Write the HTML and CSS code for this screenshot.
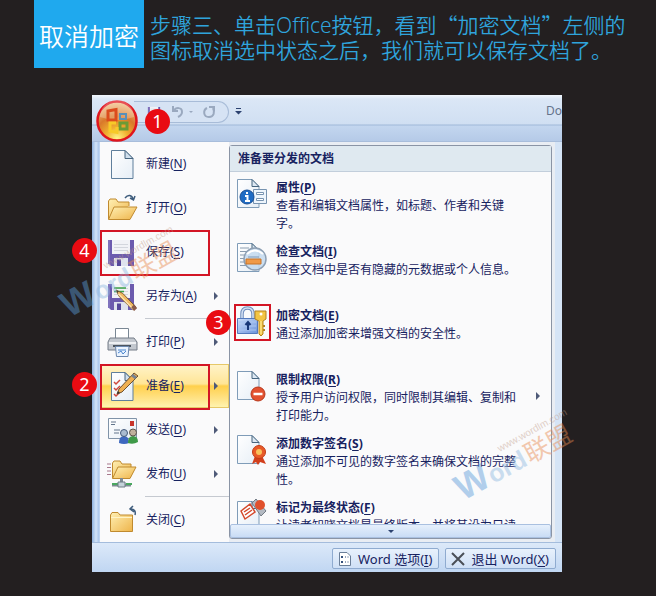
FILE: index.html
```html
<!DOCTYPE html>
<html lang="zh-CN">

<head>
    <meta charset="UTF-8">
    <meta name="viewport" content="width=device-width, initial-scale=1.0">
    <title>取消加密</title>
    <link rel="stylesheet" href="styles.css">
</head>

<body>

    <!-- gradientes e formas usadas em varios icones -->
    <svg class="defs" width="0" height="0" aria-hidden="true">
        <defs>
            <linearGradient id="folder" x1="0" y1="0" x2="1" y2="1">
                <stop offset="0" stop-color="#fff0b4" />
                <stop offset="1" stop-color="#eeb44a" />
            </linearGradient>
            <linearGradient id="paper" x1="0" y1="0" x2="1" y2="1">
                <stop offset="0" stop-color="#ffffff" />
                <stop offset="1" stop-color="#e6eef6" />
            </linearGradient>
            <linearGradient id="lock" x1="0" y1="0" x2="1" y2="1">
                <stop offset="0" stop-color="#cfe0fb" />
                <stop offset="1" stop-color="#6a92dc" />
            </linearGradient>
            <radialGradient id="orb" cx="0.5" cy="0.95" r="0.95">
                <stop offset="0" stop-color="#fff58a" />
                <stop offset="0.3" stop-color="#f0b030" />
                <stop offset="0.6" stop-color="#d9782a" />
                <stop offset="1" stop-color="#f3c48c" />
            </radialGradient>
            <symbol id="page" viewBox="0 0 32 32">
                <path d="M5.500 2.500H19L27 10.500V30.500H5.500Z" fill="url(#paper)" stroke="#5f7f9c" />
                <path d="M19 2.500V10.500H27Z" fill="#cfdfed" stroke="#47657f" />
            </symbol>
            <symbol id="doc" viewBox="0 0 32 32">
                <path d="M.500 1.500H15L22 8.500V29.500H.500Z" fill="url(#paper)" stroke="#7f9cb8" />
                <path d="M15 1.500V8.500H22Z" fill="#dce8f3" stroke="#47657f" />
            </symbol>
            <symbol id="floppy" viewBox="0 0 32 32">
                <path d="M2 4H28V30H5L2 27Z" fill="#6c5bae" />
                <path d="M2 4H4V28H2Z" fill="#8073bd" />
                <path d="M6 4H24V18H6Z" fill="#f1f2f6" />
                <path d="M8 8.500H22M8 11.500H22M8 14.500H22" stroke="#d3d6dd" />
                <path d="M8 22H22V30H8Z" fill="#dfe3ee" />
                <path d="M11 23.500H15V30H11Z" fill="#55479a" />
            </symbol>
            <symbol id="pencil" viewBox="0 0 24 24">
                <path d="M1 1L8 4.500L22 19L19 22L4.500 8Z" fill="#f0b964" stroke="#7b5a2c" />
                <path d="M3.500 5L19 21" stroke="#fbe2ae" stroke-width="1.500" />
                <path d="M17 19L20 16L23 20L20 23Z" fill="#8b5c4a" />
                <path d="M1 1L4 2.500L2.500 4Z" fill="#333" />
            </symbol>
            <symbol id="watermark" viewBox="0 0 150 110">
                <g transform="translate(18 98) rotate(-29)">
                    <text class="wm-w" x="0" y="0">W</text>
                    <text class="wm-ord" x="35" y="0">ord</text>
                    <text class="wm-cn" x="77" y="0">联盟</text>
                    <text class="wm-url" x="56" y="-25">www.wordlm.com</text>
                </g>
            </symbol>
        </defs>
    </svg>

    <header class="step">
        <h1 class="step-tag">取消加密</h1>
        <p class="step-text">步骤三、单击<span class="latin">Office</span>按钮，看到“加密文档”左侧的<br>图标取消选中状态之后，我们就可以保存文档了。</p>
    </header>

    <main class="window">
        <div class="titlebar">
            <button class="office" aria-label="Office">
                <svg viewBox="0 0 42 42" width="42" height="42">
                    <circle cx="21" cy="21" r="19.500" fill="url(#orb)" stroke="#e0151d" stroke-width="2.500" />
                    <path d="M4 17A17 17 0 0 1 38 17Q21 23 4 17Z" fill="#fff" opacity=".25" />
                    <path d="M12 11L20 9.500V20H12Z" fill="none" stroke="#dc4b1c" stroke-width="3" />
                    <path d="M24 14H30V19H24Z" fill="none" stroke="#5a8fb8" stroke-width="2" />
                    <path d="M24 23H31V29H24Z" fill="none" stroke="#6b9b35" stroke-width="3" />
                    <path d="M20 23H14V31L21 32.500V27" fill="none" stroke="#f7c928" stroke-width="3" />
                </svg>
            </button>
            <span class="badge badge-office">1</span>
            <div class="quick">
                <button aria-label="保存">
                    <svg viewBox="0 0 32 32" width="15" height="15"><use href="#floppy" /></svg>
                </button>
                <button aria-label="撤消">
                    <svg viewBox="0 0 22 14" width="22" height="14" fill="none" stroke="#9aa9bf" stroke-width="2">
                        <path d="M2 1V6H7M2.500 6C5 2 11 2 11 7C11 10 9 11 7 12" />
                        <path d="M18 6H22L20 8Z" fill="#9aa9bf" stroke="none" />
                    </svg>
                </button>
                <button aria-label="恢复">
                    <svg viewBox="0 0 14 14" width="14" height="14" fill="none" stroke="#9aa9bf" stroke-width="2">
                        <path d="M7 2H12V6M11 3C13 7 12 12 7 12C1 12 1 5 5 3" />
                    </svg>
                </button>
            </div>
            <button class="more" aria-label="自定义快速访问工具栏">
                <svg viewBox="0 0 7 7" width="7" height="7" fill="#2c4270"><path d="M1 0H6V1H1ZM0 3H7L3.500 6.500Z" /></svg>
            </button>
            <span class="doc-title">Do</span>
        </div>

        <div class="menu">
            <ul class="commands">
                <li>
                    <button>
                        <svg class="icon" viewBox="0 0 32 32"><use href="#page" /></svg>
                        <span>新建(<u>N</u>)</span>
                    </button>
                </li>
                <li>
                    <button>
                        <svg class="icon" viewBox="0 0 32 32">
                            <path d="M2.500 27V9L4 7H10L12 10H23V14" fill="url(#folder)" stroke="#c08a2e" />
                            <path d="M2.500 27.500L8 15H31L24 27.500Z" fill="url(#folder)" stroke="#c08a2e" />
                            <path d="M19 6C22 2 26 3 27 7M24 6L27.500 8L29 4" fill="none" stroke="#3e5c7c" stroke-width="1.500" />
                        </svg>
                        <span>打开(<u>O</u>)</span>
                    </button>
                </li>
                <li>
                    <button>
                        <svg class="icon" viewBox="0 0 32 32"><use href="#floppy" /></svg>
                        <span>保存(<u>S</u>)</span>
                    </button>
                    <span class="frame"></span>
                    <span class="badge">4</span>
                </li>
                <li class="has-sub">
                    <button>
                        <svg class="icon" viewBox="0 0 32 32">
                            <use href="#floppy" />
                            <path d="M8 8H20M8 11.500H18" stroke="#3ba34a" stroke-width="1.500" />
                            <use href="#pencil" x="9" y="9" width="23" height="23" />
                        </svg>
                        <span>另存为(<u>A</u>)</span>
                    </button>
                </li>
                <li class="sep"></li>
                <li class="has-sub">
                    <button>
                        <svg class="icon" viewBox="0 0 32 32">
                            <path d="M9.500 2.500H22.500V14H9.500Z" fill="#fff" stroke="#7a8794" />
                            <path d="M4 12H28L31 16V24H2V16Z" fill="#c3c8cf" stroke="#747d88" />
                            <path d="M3 17H30" stroke="#eef0f3" stroke-width="2" />
                            <path d="M7 20H25" stroke="#4b545e" stroke-width="2" />
                            <path d="M9.500 20.500H23L22 30.500H10.500Z" fill="#eaf3ff" stroke="#6b87ad" />
                            <path d="M12 24H20M12 27L15 25L17 28L20 25" fill="none" stroke="#4a86cf" />
                        </svg>
                        <span>打印(<u>P</u>)</span>
                    </button>
                </li>
                <li class="has-sub selected">
                    <button>
                        <svg class="icon" viewBox="0 0 32 32">
                            <use href="#page" />
                            <path d="M8 12L10 14L14 10M8 18L10 20L14 16M8 24L10 26L14 22" fill="none" stroke="#d0483c" stroke-width="1.500" />
                            <path d="M11 24L13 19L28 3L32 6L16 22Z" fill="#efb052" stroke="#6f5230" />
                            <path d="M26 5L30 8" stroke="#768290" stroke-width="3" />
                            <path d="M11 24L12 21L14 23Z" fill="#333" />
                        </svg>
                        <span>准备(<u>E</u>)</span>
                    </button>
                    <span class="frame"></span>
                    <span class="badge">2</span>
                </li>
                <li class="has-sub">
                    <button>
                        <svg class="icon" viewBox="0 0 32 32">
                            <path d="M2.500 4.500H30.500V24.500H2.500Z" fill="url(#paper)" stroke="#8093a8" />
                            <path d="M5 8H10M5 10.500H9M8 16H14M8 19H13" stroke="#62758b" />
                            <path d="M24 7H28V12H24Z" fill="#c8352b" />
                            <path d="M13 29Q13 22 18 22Q23 22 23 29Q18 31 13 29Z" fill="#3e68bf" />
                            <circle cx="18" cy="19" r="3.500" fill="#a9bbd0" stroke="#44597a" />
                            <path d="M22 29Q22 22 27 22Q32 22 32 28Q27 31 22 29Z" fill="#3f9a48" />
                            <circle cx="27" cy="18.500" r="3.500" fill="#c0b09c" stroke="#5c5349" />
                        </svg>
                        <span>发送(<u>D</u>)</span>
                    </button>
                </li>
                <li class="has-sub">
                    <button>
                        <svg class="icon" viewBox="0 0 32 32">
                            <path d="M1 6H5M1 9.500H5M1 13H5M1 16.500H5" stroke="#a8788c" />
                            <path d="M6.500 20V5L8 3H14L16 6H25V9" fill="url(#folder)" stroke="#c08a2e" />
                            <path d="M6.500 20.500L12 9H30L24 20.500Z" fill="url(#folder)" stroke="#c08a2e" />
                            <path d="M15.500 20V25M6 27H25" stroke="#7f8b93" stroke-width="3" />
                            <path d="M6 26H12M20 26H26" stroke="#4aa860" stroke-width="2" />
                            <path d="M12 24H19V29H12Z" fill="#c5d3da" stroke="#6e7d86" />
                        </svg>
                        <span>发布(<u>U</u>)</span>
                    </button>
                </li>
                <li class="sep"></li>
                <li>
                    <button>
                        <svg class="icon" viewBox="0 0 32 32">
                            <path d="M4.500 27.500V11L6 8.500H12L14 11H26.500V27.500Z" fill="url(#folder)" stroke="#c08a2e" />
                            <path d="M5 13.500H26" stroke="#fff4c8" />
                            <path d="M29 11C30 7 28 5 25 5M27 2L24 5L28 8" fill="none" stroke="#3e5c7c" stroke-width="1.500" />
                        </svg>
                        <span>关闭(<u>C</u>)</span>
                    </button>
                </li>
            </ul>

            <section class="panel">
                <h2>准备要分发的文档</h2>
                <ul class="options">
                    <li>
                        <button>
                            <svg class="icon" viewBox="0 0 32 32">
                                <use href="#doc" />
                                <path d="M16.500 11.500H29.500V25.500H16.500Z" fill="#eef5fc" stroke="#7793b0" />
                                <path d="M19.500 14.500H26.500V16.500H19.500ZM19.500 20.500H26.500V22.500H19.500Z" fill="#fff" stroke="#7793b0" />
                                <circle cx="10" cy="19" r="7" fill="#1f6cc4" stroke="#1a4f94" />
                                <path d="M10 14V16M8 18H10.500V23M8 23H13" fill="none" stroke="#fff" stroke-width="2" />
                            </svg>
                            <span class="text"><strong>属性(<u>P</u>)</strong>查看和编辑文档属性，如标题、作者和关键字。</span>
                        </button>
                    </li>
                    <li>
                        <button>
                            <svg class="icon" viewBox="0 0 32 32">
                                <use href="#doc" />
                                <path d="M3 6H12M3 9.500H10M3 13H9M3 16.500H8M3 20H8M3 23.500H9" stroke="#8b9db0" />
                                <circle cx="18" cy="17" r="11" fill="#c3d9ef" fill-opacity=".85" stroke="#8d9fb3" stroke-width="1.500" />
                                <path d="M10 12Q18 5 26 12" fill="none" stroke="#fff" stroke-width="2" />
                                <path d="M9 17H24V22H9Z" fill="#f09a48" stroke="#c87428" />
                                <path d="M11 15H22" stroke="#7d99b8" />
                            </svg>
                            <span class="text"><strong>检查文档(<u>I</u>)</strong>检查文档中是否有隐藏的元数据或个人信息。</span>
                        </button>
                    </li>
                    <li>
                        <button>
                            <svg class="icon" viewBox="0 0 32 32">
                                <path d="M5 14V8Q5 2 10.500 2Q16 2 16 8V14" fill="none" stroke="#6f8dbd" stroke-width="3.500" />
                                <path d="M5 14V8Q5 2 10.500 2Q16 2 16 8V14" fill="none" stroke="#d4e1f4" stroke-width="1.500" />
                                <path d="M.500 12.500H20.500V27.500H.500Z" fill="url(#lock)" stroke="#5379bd" />
                                <path d="M2 16H19M2 20H19M2 24H19" stroke="#aac5f1" />
                                <path d="M11 24V17M8.500 19L11 16L13.500 19" fill="none" stroke="#183778" stroke-width="2" />
                                <path d="M18 5H29V13L26 15V28L24 30L22 28V15L18 13Z" fill="#f3c544" stroke="#b58420" />
                                <circle cx="24" cy="8" r="1.500" fill="#fff" />
                                <path d="M24 15V28" stroke="#fff0a0" />
                                <path d="M26 20H28M26 24H28" stroke="#b58420" stroke-width="2" />
                            </svg>
                            <span class="text"><strong>加密文档(<u>E</u>)</strong>通过添加加密来增强文档的安全性。</span>
                        </button>
                        <span class="frame frame-icon"></span>
                        <span class="badge badge-option">3</span>
                    </li>
                    <li class="has-sub">
                        <button>
                            <svg class="icon" viewBox="0 0 32 32">
                                <use href="#doc" />
                                <circle cx="21" cy="24" r="7" fill="#e2512f" stroke="#b8391d" />
                                <path d="M16.500 24H25.500" stroke="#fff" stroke-width="2.500" />
                            </svg>
                            <span class="text"><strong>限制权限(<u>R</u>)</strong>授予用户访问权限，同时限制其编辑、复制和打印能力。</span>
                        </button>
                    </li>
                    <li>
                        <button>
                            <svg class="icon" viewBox="0 0 32 32">
                                <use href="#doc" />
                                <path d="M18 22L15 30L19 28L21 31L23 28L29 30L25 22Z" fill="#d23f1c" />
                                <circle cx="22" cy="18" r="6.500" fill="#e85a28" stroke="#c23c16" />
                                <circle cx="22" cy="18" r="3" fill="#f9c25c" />
                            </svg>
                            <span class="text"><strong>添加数字签名(<u>S</u>)</strong>通过添加不可见的数字签名来确保文档的完整性。</span>
                        </button>
                    </li>
                    <li>
                        <button>
                            <svg class="icon" viewBox="0 0 32 32">
                                <use href="#doc" y="2" />
                                <path d="M15 5L19 1L29 13L24 18Z" fill="#b4bac2" stroke="#737b85" />
                                <circle cx="23" cy="7" r="5" fill="#e0502c" />
                                <path d="M4 13L13 6L18 14L8 21Z" fill="#fff" stroke="#d4492c" stroke-width="1.500" />
                                <path d="M7 14L13 10M8 17L15 12" stroke="#d4492c" stroke-width="1.500" />
                            </svg>
                            <span class="text"><strong>标记为最终状态(<u>F</u>)</strong>让读者知晓文档是最终版本，并将其设为只读的。</span>
                        </button>
                    </li>
                </ul>
                <button class="scroll" aria-label="向下滚动"></button>
            </section>
        </div>

        <footer class="bottom">
            <button>
                <svg viewBox="0 0 14 14" width="14" height="14">
                    <path d="M1.500.500H9L12.500 4V13.500H1.500Z" fill="#fff" stroke="#6b7f99" />
                    <path d="M3 4H5V6H3ZM3 9H5V11H3Z" fill="#34507c" />
                    <path d="M7 5H8M9.500 5H10.500M7 10H8M9.500 10H10.500" stroke="#34507c" />
                </svg>
                <span>Word 选项(<u>I</u>)</span>
            </button>
            <button>
                <svg viewBox="0 0 14 14" width="14" height="14">
                    <path d="M1 1L13 13M13 1L1 13" stroke="#4a4f57" stroke-width="2" />
                </svg>
                <span>退出 Word(<u>X</u>)</span>
            </button>
        </footer>

        <svg class="watermark watermark-left" aria-hidden="true"><use href="#watermark" /></svg>
        <svg class="watermark watermark-right" aria-hidden="true"><use href="#watermark" /></svg>
    </main>

</body>

</html>
```

FILE: styles.css
```css
* {
    margin: 0;
    padding: 0;
    box-sizing: border-box;
}

body {
    background-color: #231f20;
    font-family: "Noto Sans", "Noto Sans CJK SC", sans-serif;
    font-size: 12px;
    line-height: 18px;
    color: #17225f;
}

ul {
    list-style: none;
}

button {
    border: none;
    background: none;
    font: inherit;
    color: inherit;
    text-align: left;
}

u {
    text-underline-offset: 2px;
}

.defs {
    position: absolute;
}

/* cabecalho */
.step {
    display: flex;
    gap: 6px;
    padding-left: 34px;
    margin-bottom: 27px;
}

.step-tag {
    flex: none;
    width: 110px;
    height: 68px;
    background-color: #1fa9ee;
    color: #fff;
    font-size: 25px;
    font-weight: 350;
    line-height: 72px;
    text-align: center;
}

.step-text {
    padding-top: 12px;
    font-family: "Noto Sans CJK SC", sans-serif;
    font-size: 21px;
    font-weight: 350;
    line-height: 24px;
    color: #2fa4dc;
    white-space: nowrap;
}

.latin {
    font-family: "Noto Sans", sans-serif;
}

/* janela */
.window {
    position: relative;
    margin: 0 94px 24px 92px;
    padding: 0 7px 0 8px;
    background: linear-gradient(to right, #8fb2de, #d3e4f8 4px, #a9c5ea 7px, #d5e4f6 8px, #d5e4f6);
}

.titlebar {
    position: relative;
    display: flex;
    align-items: flex-start;
    height: 47px;
    margin: 0 -7px 0 -8px;
    padding: 6px 0 0 42px;
    background: linear-gradient(#f2f7fd, #dbe7f6 4px, #d0dff2 29px, #9fb8d8 30px, #c3d6ef 31px, #b5cae7 46px, #9bb0cf 47px);
}

.office {
    position: absolute;
    left: 4px;
    top: 5px;
    z-index: 2;
    width: 42px;
    height: 42px;
}

.quick {
    display: flex;
    align-items: center;
    gap: 9px;
    height: 22px;
    padding: 0 12px 0 13px;
    border: 1px solid #a8bcd8;
    border-left: none;
    border-radius: 0 11px 11px 0;
    background-color: #d6e3f4;
}

.quick svg,
.more svg,
.office svg {
    display: block;
}

.more {
    margin: 7px 0 0 6px;
}

.doc-title {
    margin-left: auto;
    color: #65738c;
    line-height: 20px;
}

.menu {
    display: flex;
    background-color: #e9edf3;
}

.commands {
    flex: none;
    width: 129px;
    background-color: #fafafb;
}

.commands li,
.options li {
    position: relative;
}

.commands button {
    display: flex;
    align-items: center;
    gap: 8px;
    width: 100%;
    height: 44px;
    padding-left: 6px;
}

.commands .sep {
    height: 2px;
    margin-left: 45px;
    border-top: 1px solid #c5c9d0;
}

.icon {
    flex: none;
    width: 32px;
    height: 32px;
}

.selected button {
    border: 1px solid #e6c868;
    padding-left: 5px;
    background: linear-gradient(#fff3c9, #ffe596 45%, #ffd04c 50%, #ffe387 80%, #fff3ae);
}

.has-sub::after {
    content: "";
    position: absolute;
    right: 11px;
    top: 18px;
    border: 4px solid transparent;
    border-left-color: #4e5a78;
    border-right: none;
}

.options .has-sub::after {
    top: 22px;
}

/* marcacoes vermelhas */
.frame {
    position: absolute;
    left: 0;
    top: 0;
    width: 110px;
    height: 46px;
    border: 2px solid #d31525;
    pointer-events: none;
}

.frame-icon {
    left: 4px;
    top: -2px;
    width: 37px;
    height: 37px;
}

.badge {
    position: absolute;
    left: -28px;
    top: 8px;
    z-index: 2;
    width: 25px;
    height: 25px;
    border-radius: 50%;
    background-color: #e90b12;
    color: #fff;
    font-size: 18px;
    line-height: 25px;
    text-align: center;
}

.badge-office {
    left: 53px;
    top: 14px;
}

.badge-option {
    left: -24px;
    top: 4px;
}

/* painel direito */
.panel {
    flex: 1;
    display: flex;
    flex-direction: column;
    min-width: 0;
    margin: 3px 3px 3px 0;
    border: 1px solid #8a94a5;
    border-radius: 3px;
    background-color: #fafafb;
}

.panel h2 {
    height: 26px;
    padding-left: 8px;
    border-bottom: 1px solid #c2cedb;
    background-color: #dfe9f0;
    font-size: 12px;
    line-height: 25px;
}

.options {
    flex: 1 1 0;
    min-height: 0;
    padding-top: 6px;
    overflow-y: clip;
}

.options li {
    height: 64px;
}

.options button {
    display: flex;
    align-items: flex-start;
    gap: 7px;
    width: 100%;
    padding: 0 28px 0 7px;
}

.text {
    flex: 1;
}

.text strong {
    display: block;
    line-height: 19px;
}

.scroll {
    display: flex;
    justify-content: center;
    align-items: center;
    height: 14px;
    border: 1px solid #a9c0e0;
    border-radius: 2px;
    background: linear-gradient(#e6f0fc, #c9dcf5);
}

.scroll::after {
    content: "";
    border: 3px solid transparent;
    border-top-color: #2c4270;
    border-bottom: none;
}

/* rodape */
.bottom {
    display: flex;
    justify-content: flex-end;
    gap: 6px;
    height: 30px;
    margin: 0 -7px 0 -8px;
    padding: 5px 6px 3px;
    border-top: 1px solid #a4bcdc;
    background: linear-gradient(#dce9f9, #c0d6f2);
}

.bottom button {
    display: flex;
    align-items: center;
    gap: 6px;
    padding: 0 6px 0 5px;
    border: 1px solid #8fabd0;
    border-radius: 2px;
    background: linear-gradient(#e8f1fc, #cfe0f6);
    font-size: 13px;
    white-space: nowrap;
}

/* marca d'agua */
.watermark {
    position: absolute;
    z-index: 3;
    width: 150px;
    height: 110px;
    overflow: visible;
    opacity: 0.45;
    pointer-events: none;
}

.watermark-left {
    left: -41px;
    top: 125px;
}

.watermark-right {
    right: -33px;
    top: 308px;
}

.wm-w,
.wm-ord,
.wm-cn {
    font-weight: 700;
    font-family: "Liberation Sans", "Noto Sans CJK SC", sans-serif;
}

.wm-w {
    font-size: 36px;
    fill: #5a9bd8;
}

.wm-ord {
    font-size: 25px;
    fill: #8fb8e0;
}

.wm-cn {
    font-size: 25px;
    font-weight: 400;
    fill: #e88a50;
}

.wm-url {
    font-family: "Liberation Sans", sans-serif;
    font-size: 10px;
    fill: #c09a88;
}
```
